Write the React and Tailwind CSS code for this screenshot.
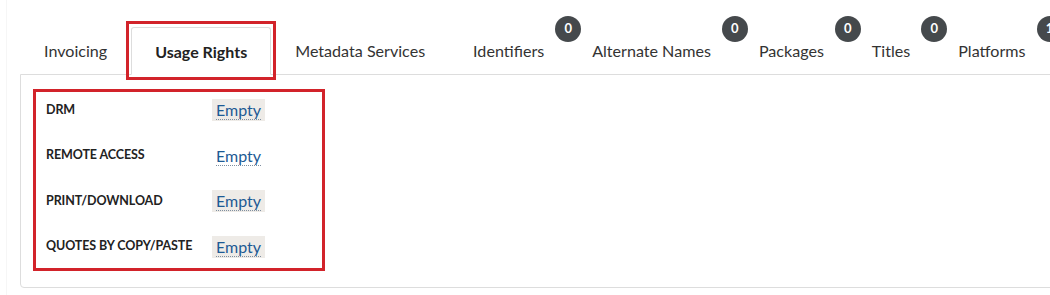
import { useState } from 'react'

const tabs = [
  { label: 'Invoicing' },
  { label: 'Usage Rights', active: true },
  { label: 'Metadata Services' },
  { label: 'Identifiers', count: 0 },
  { label: 'Alternate Names', count: 0 },
  { label: 'Packages', count: 0 },
  { label: 'Titles', count: 0 },
  { label: 'Platforms', count: 1 },
]

const rights = [
  { label: 'DRM', shaded: true },
  { label: 'Remote Access', shaded: false },
  { label: 'Print/Download', shaded: true },
  { label: 'Quotes by Copy/Paste', shaded: true },
]

export default function App() {
  const [active] = useState('Usage Rights')

  return (
    <div
      className="h-[295px] w-[1050px] overflow-hidden bg-white"
      style={{ fontFamily: 'Lato, "Open Sans", sans-serif' }}
    >
      <div className="ml-[6px] h-full border-l border-[#f6f6f6] pl-[13px] pt-[27px]">
        {/* Tabs */}
        <ul className="relative z-10 flex w-[1100px] items-end">
          {tabs.map((tab) => {
            const isActive = tab.label === active
            return (
              <li
                key={tab.label}
                className={
                  isActive
                    ? 'relative -mb-px flex h-[48px] shrink-0 items-center rounded-t-[3px] border border-b-white border-[#dddddd] bg-white px-[23px] pt-[2px] text-[16px] font-bold text-[#222222]'
                    : 'relative flex h-[47px] shrink-0 items-center px-[24px] pt-[2px] text-[16.1px] text-[#333333]'
                }
              >
                {tab.label}
                {tab.count !== undefined && (
                  <span className="absolute -right-[13px] -top-[11px] flex h-[26px] w-[26px] items-center justify-center rounded-full bg-[#45494c] text-[13px] font-bold text-white">
                    {tab.count}
                  </span>
                )}
                {isActive && (
                  <span className="absolute -left-[6px] -right-[6px] -top-[7px] -bottom-[6px] border-[3px] border-[#d2232a]" />
                )}
              </li>
            )
          })}
        </ul>

        {/* Panel */}
        <div className="h-[214px] w-[1100px] rounded-bl-[4px] border border-[#dddddd] pl-[12px] pt-[14px]">
          <div className="flex w-[292px] flex-col gap-[23.5px] border-[3px] border-[#d2232a] pb-[10px] pl-[10px] pt-[7px]">
            {rights.map((row) => (
              <div key={row.label} className="flex h-[22px] items-center">
                <span className="w-[166px] shrink-0 text-[12.5px] font-bold uppercase tracking-[-0.1px] text-[#222222]">
                  {row.label}
                </span>
                <span
                  className={
                    row.shaded
                      ? 'flex h-[22px] items-center bg-[#eeebe7] px-[4px]'
                      : 'flex h-[22px] items-center px-[4px]'
                  }
                >
                  <span className="border-b border-dotted border-[#7f8fa0] text-[16px] leading-[19px] text-[#1d5a94]">
                    Empty
                  </span>
                </span>
              </div>
            ))}
          </div>
        </div>
      </div>
    </div>
  )
}
